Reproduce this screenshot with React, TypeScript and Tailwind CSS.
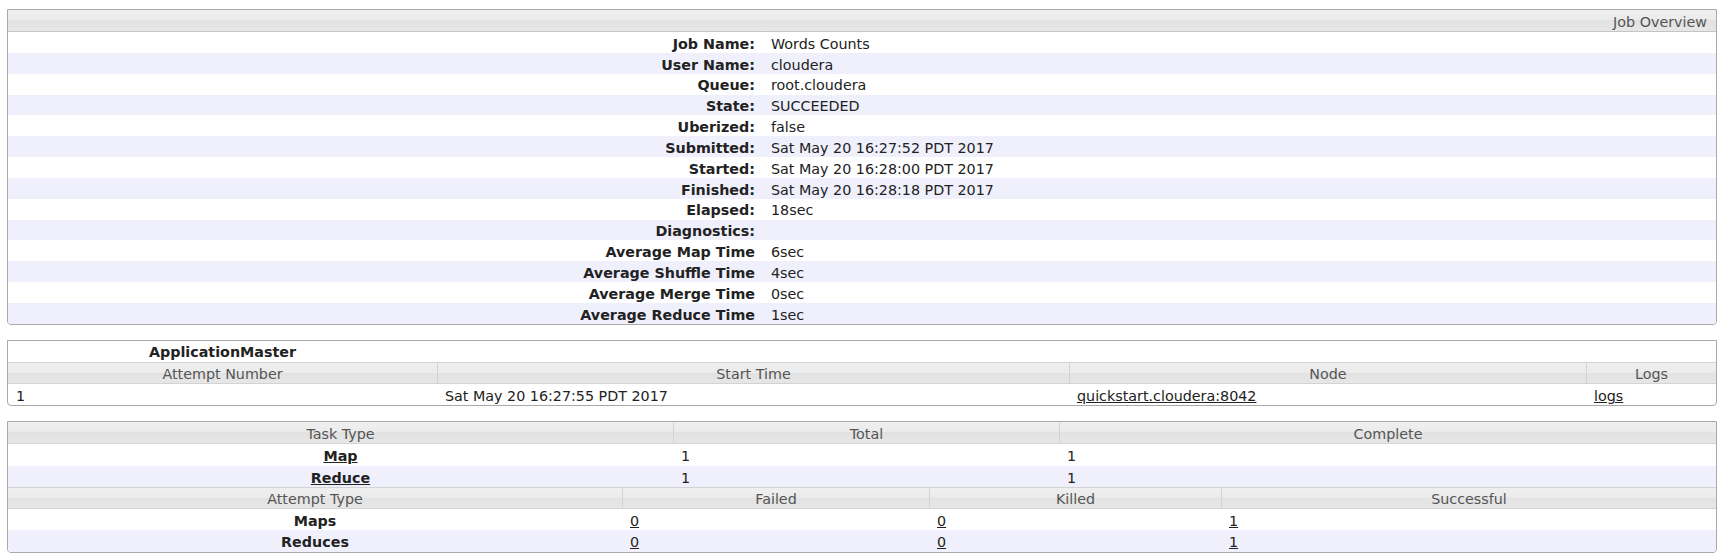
import React from "react";

const FONT = { fontFamily: '"DejaVu Sans", "Liberation Sans", sans-serif' };

const HEAD =
  "bg-[linear-gradient(#efefef,#ebebeb_50%,#e2e2e2_50%,#e7e7e7)] text-[#555]";

function HeadRow({ cols }: { cols: { w: string; label: string }[] }) {
  return (
    <div className={`flex h-[22px] border-y border-[#d3d3d3] ${HEAD}`}>
      {cols.map((c, i) => (
        <div
          key={i}
          className={`${c.w} flex items-center justify-center pt-[3px] ${i > 0 ? "border-l border-[#d3d3d3]" : ""}`}
        >
          {c.label}
        </div>
      ))}
    </div>
  );
}

const info: [string, string][] = [
  ["Job Name:", "Words Counts"],
  ["User Name:", "cloudera"],
  ["Queue:", "root.cloudera"],
  ["State:", "SUCCEEDED"],
  ["Uberized:", "false"],
  ["Submitted:", "Sat May 20 16:27:52 PDT 2017"],
  ["Started:", "Sat May 20 16:28:00 PDT 2017"],
  ["Finished:", "Sat May 20 16:28:18 PDT 2017"],
  ["Elapsed:", "18sec"],
  ["Diagnostics:", ""],
  ["Average Map Time", "6sec"],
  ["Average Shuffle Time", "4sec"],
  ["Average Merge Time", "0sec"],
  ["Average Reduce Time", "1sec"],
];

export default function App() {
  return (
    <div
      className="w-[1727px] h-[560px] bg-white pl-[7px] pr-[10px] pt-[9px] text-[14.3px] text-[#222]"
      style={FONT}
    >
      {/* Job Overview */}
      <div className="border border-[#a9a9a9] rounded-b-[4px] overflow-hidden">
        <div
          className={`h-[22px] flex items-center justify-end pr-[9px] pt-[4px] border-b border-[#c4c4c4] ${HEAD}`}
        >
          Job Overview
        </div>
        {info.map(([k, v], i) => (
          <div
            key={k}
            className={`flex h-[20.85px] items-center pt-[4px] ${i % 2 === 1 ? "bg-[#f0f0fd]" : "bg-white"}`}
          >
            <div className="w-[755px] shrink-0 text-right pr-[8px] font-bold">{k}</div>
            <div className="pl-[8px]">{v}</div>
          </div>
        ))}
      </div>

      {/* ApplicationMaster */}
      <div className="mt-[15px] border border-[#a9a9a9] rounded-b-[4px] overflow-hidden">
        <div className="flex h-[21px] items-center pt-[3px]">
          <div className="w-[429px] text-center font-bold">ApplicationMaster</div>
        </div>
        <HeadRow
          cols={[
            { w: "w-[429px]", label: "Attempt Number" },
            { w: "w-[632px]", label: "Start Time" },
            { w: "w-[517px]", label: "Node" },
            { w: "flex-1", label: "Logs" },
          ]}
        />
        <div className="flex h-[21.5px] items-center pt-[5px]">
          <div className="w-[429px] pl-[8px]">1</div>
          <div className="w-[632px] pl-[8px]">Sat May 20 16:27:55 PDT 2017</div>
          <div className="w-[517px] pl-[8px]">
            <a className="underline" href="#">quickstart.cloudera:8042</a>
          </div>
          <div className="flex-1 pl-[8px]">
            <a className="underline" href="#">logs</a>
          </div>
        </div>
      </div>

      {/* Tasks */}
      <div className="mt-[15px] border border-[#a9a9a9] rounded-b-[4px] overflow-hidden">
        <div className={`flex h-[22px] border-b border-[#d3d3d3] ${HEAD}`}>
          <div className="w-[665px] flex items-center justify-center pt-[3px]">Task Type</div>
          <div className="w-[386px] flex items-center justify-center pt-[3px] border-l border-[#d3d3d3]">Total</div>
          <div className="flex-1 flex items-center justify-center pt-[3px] border-l border-[#d3d3d3]">Complete</div>
        </div>
        {[
          ["Map", "1", "1"],
          ["Reduce", "1", "1"],
        ].map(([t, a, b], i) => (
          <div
            key={t}
            className={`flex h-[21.4px] items-center pt-[4px] ${i % 2 === 1 ? "bg-[#f0f0fd]" : "bg-white"}`}
          >
            <div className="w-[665px] text-center font-bold">
              <a className="underline" href="#">{t}</a>
            </div>
            <div className="w-[386px] pl-[8px]">{a}</div>
            <div className="flex-1 pl-[8px]">{b}</div>
          </div>
        ))}
        <HeadRow
          cols={[
            { w: "w-[614px]", label: "Attempt Type" },
            { w: "w-[307px]", label: "Failed" },
            { w: "w-[292px]", label: "Killed" },
            { w: "flex-1", label: "Successful" },
          ]}
        />
        {[
          ["Maps", "0", "0", "1"],
          ["Reduces", "0", "0", "1"],
        ].map(([t, a, b, c], i) => (
          <div
            key={t}
            className={`flex h-[21.3px] items-center pt-[3px] ${i % 2 === 1 ? "bg-[#f0f0fd]" : "bg-white"}`}
          >
            <div className="w-[614px] text-center font-bold">{t}</div>
            <div className="w-[307px] pl-[8px]">
              <a className="underline" href="#">{a}</a>
            </div>
            <div className="w-[292px] pl-[8px]">
              <a className="underline" href="#">{b}</a>
            </div>
            <div className="flex-1 pl-[8px]">
              <a className="underline" href="#">{c}</a>
            </div>
          </div>
        ))}
      </div>
    </div>
  );
}
